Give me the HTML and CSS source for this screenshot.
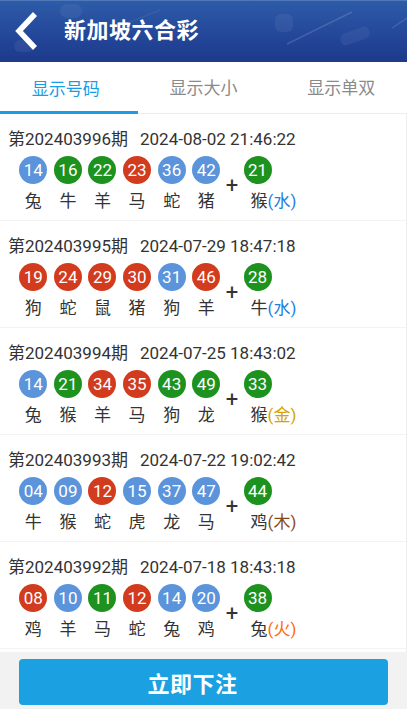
FILE: index.html
```html
<!DOCTYPE html>
<html lang="zh-CN">
<head>
<meta charset="utf-8">
<title>新加坡六合彩</title>
<link rel="stylesheet" href="styles.css">
</head>
<body>
<div class="page">
  <header class="topbar">
    <svg class="back" width="40" height="62" viewBox="0 0 40 62" aria-hidden="true">
      <polyline points="35,14 19,31 35,48" fill="none" stroke="#fff" stroke-width="5.5" stroke-linejoin="miter" stroke-linecap="butt"/>
    </svg>
    <h1 class="title">新加坡六合彩</h1>
    <svg class="deco" width="407" height="62" viewBox="0 0 407 62" aria-hidden="true">
      <line x1="287" y1="44" x2="352" y2="12" stroke="rgba(255,255,255,0.14)" stroke-width="1.5"/>
      <line x1="392" y1="28" x2="407" y2="18" stroke="rgba(255,255,255,0.12)" stroke-width="1.5"/>
      <line x1="115" y1="28" x2="160" y2="10" stroke="rgba(255,255,255,0.06)" stroke-width="1.5"/>
      <g fill="rgba(255,255,255,0.06)">
        <rect x="275" y="14" width="18" height="18" rx="6"/>
        <rect x="340" y="30" width="30" height="12" rx="5" transform="rotate(-20 355 36)"/>
        <rect x="60" y="4" width="22" height="14" rx="7"/>
        <rect x="14" y="40" width="20" height="12" rx="6"/>
      </g>
    </svg>
  </header>

  <nav class="tabs">
    <div class="tab active">显示号码</div>
    <div class="tab">显示大小</div>
    <div class="tab">显示单双</div>
  </nav>

  <main class="list">
    <section class="draw">
      <div class="draw-title">第202403996期<span class="time">2024-08-02 21:46:22</span></div>
      <div class="balls">
        <div class="cell"><span class="ball blue">14</span><span class="zod">兔</span></div>
        <div class="cell"><span class="ball green">16</span><span class="zod">牛</span></div>
        <div class="cell"><span class="ball green">22</span><span class="zod">羊</span></div>
        <div class="cell"><span class="ball red">23</span><span class="zod">马</span></div>
        <div class="cell"><span class="ball blue">36</span><span class="zod">蛇</span></div>
        <div class="cell"><span class="ball blue">42</span><span class="zod">猪</span></div>
        <div class="plus">+</div>
        <div class="cell special"><span class="ball green">21</span><span class="zod">猴<em class="el water">(水)</em></span></div>
      </div>
    </section>

    <section class="draw">
      <div class="draw-title">第202403995期<span class="time">2024-07-29 18:47:18</span></div>
      <div class="balls">
        <div class="cell"><span class="ball red">19</span><span class="zod">狗</span></div>
        <div class="cell"><span class="ball red">24</span><span class="zod">蛇</span></div>
        <div class="cell"><span class="ball red">29</span><span class="zod">鼠</span></div>
        <div class="cell"><span class="ball red">30</span><span class="zod">猪</span></div>
        <div class="cell"><span class="ball blue">31</span><span class="zod">狗</span></div>
        <div class="cell"><span class="ball red">46</span><span class="zod">羊</span></div>
        <div class="plus">+</div>
        <div class="cell special"><span class="ball green">28</span><span class="zod">牛<em class="el water">(水)</em></span></div>
      </div>
    </section>

    <section class="draw">
      <div class="draw-title">第202403994期<span class="time">2024-07-25 18:43:02</span></div>
      <div class="balls">
        <div class="cell"><span class="ball blue">14</span><span class="zod">兔</span></div>
        <div class="cell"><span class="ball green">21</span><span class="zod">猴</span></div>
        <div class="cell"><span class="ball red">34</span><span class="zod">羊</span></div>
        <div class="cell"><span class="ball red">35</span><span class="zod">马</span></div>
        <div class="cell"><span class="ball green">43</span><span class="zod">狗</span></div>
        <div class="cell"><span class="ball green">49</span><span class="zod">龙</span></div>
        <div class="plus">+</div>
        <div class="cell special"><span class="ball green">33</span><span class="zod">猴<em class="el metal">(金)</em></span></div>
      </div>
    </section>

    <section class="draw">
      <div class="draw-title">第202403993期<span class="time">2024-07-22 19:02:42</span></div>
      <div class="balls">
        <div class="cell"><span class="ball blue">04</span><span class="zod">牛</span></div>
        <div class="cell"><span class="ball blue">09</span><span class="zod">猴</span></div>
        <div class="cell"><span class="ball red">12</span><span class="zod">蛇</span></div>
        <div class="cell"><span class="ball blue">15</span><span class="zod">虎</span></div>
        <div class="cell"><span class="ball blue">37</span><span class="zod">龙</span></div>
        <div class="cell"><span class="ball blue">47</span><span class="zod">马</span></div>
        <div class="plus">+</div>
        <div class="cell special"><span class="ball green">44</span><span class="zod">鸡<em class="el wood">(木)</em></span></div>
      </div>
    </section>

    <section class="draw">
      <div class="draw-title">第202403992期<span class="time">2024-07-18 18:43:18</span></div>
      <div class="balls">
        <div class="cell"><span class="ball red">08</span><span class="zod">鸡</span></div>
        <div class="cell"><span class="ball blue">10</span><span class="zod">羊</span></div>
        <div class="cell"><span class="ball green">11</span><span class="zod">马</span></div>
        <div class="cell"><span class="ball red">12</span><span class="zod">蛇</span></div>
        <div class="cell"><span class="ball blue">14</span><span class="zod">兔</span></div>
        <div class="cell"><span class="ball blue">20</span><span class="zod">鸡</span></div>
        <div class="plus">+</div>
        <div class="cell special"><span class="ball green">38</span><span class="zod">兔<em class="el fire">(火)</em></span></div>
      </div>
    </section>
  </main>

  <footer class="bottombar">
    <button class="bet" type="button">立即下注</button>
  </footer>
</div>
</body>
</html>
```

FILE: styles.css
```css
* {
  box-sizing: border-box;
}

html, body {
  margin: 0;
  padding: 0;
  background: #fff;
}

body {
  font-family: Roboto, "Noto Sans CJK SC", sans-serif;
  color: #333;
}

.page {
  width: 407px;
  height: 709px;
  display: flex;
  flex-direction: column;
  overflow: hidden;
}

/* header */
.topbar {
  position: relative;
  height: 62px;
  flex: none;
  display: flex;
  align-items: center;
  background: linear-gradient(180deg, #2d5ca8 0%, #25499b 50%, #1d3a8b 100%);
  border-top: 1px solid #4f78bb;
  overflow: hidden;
}

.back {
  flex: none;
  position: relative;
  z-index: 1;
  margin-top: -1px;
}

.title {
  margin: -1px 0 0 24px;
  font-size: 22px;
  font-weight: bold;
  color: #fff;
  letter-spacing: 0.5px;
  line-height: 1;
  position: relative;
  z-index: 1;
}

.deco {
  position: absolute;
  left: 0;
  top: -1px;
}

/* tabs */
.tabs {
  flex: none;
  height: 52px;
  display: flex;
  border-bottom: 1px solid #ececec;
}

.tab {
  flex: 1;
  display: flex;
  align-items: center;
  justify-content: center;
  font-size: 17px;
  color: #8a8a8a;
  padding-top: 1px;
  border-bottom: 3px solid transparent;
}

.tab:first-child {
  padding-right: 6px;
}

.tab:last-child {
  padding-left: 6px;
}

.tab.active {
  color: #1a9de4;
  border-bottom-color: #1a9de4;
  margin-bottom: -1px;
}

/* list */
.list {
  flex: 1;
  overflow: hidden;
  border-right: 1px solid #eeeeee;
}

.draw {
  padding: 14px 0 9px 8px;
  border-bottom: 1px solid #f3f3f3;
}

.draw-title {
  font-size: 17px;
  line-height: 22px;
  color: #333;
  white-space: nowrap;
}

.time {
  margin-left: 12px;
}

.balls {
  display: flex;
  margin-top: 6px;
  padding-left: 8px;
}

.cell {
  width: 34.6px;
  display: flex;
  flex-direction: column;
  align-items: center;
}

.ball {
  width: 28px;
  height: 28px;
  border-radius: 50%;
  display: flex;
  align-items: center;
  justify-content: center;
  color: #fff;
  font-size: 17px;
  line-height: 1;
}

.ball.blue { background: #5b94db; }
.ball.green { background: #1e921f; }
.ball.red { background: #d23b1d; }

.zod {
  margin-top: 7px;
  font-size: 17px;
  line-height: 20px;
  color: #333;
  white-space: nowrap;
}

.plus {
  width: 17px;
  text-align: center;
  font-size: 22px;
  line-height: 20px;
  margin-top: 20px;
  color: #333;
  font-weight: normal;
}

.cell.special {
  width: 34px;
  align-items: flex-start;
}

.cell.special .ball {
  margin-left: 3px;
}

.cell.special .zod {
  margin-left: 10px;
}

.el {
  font-style: normal;
}

.el.water { color: #1c7fe3; }
.el.metal { color: #d6a400; }
.el.wood { color: #8a4a17; }
.el.fire { color: #ff6c0a; }

/* bottom */
.bottombar {
  flex: none;
  height: 57px;
  background: #f2f2f2;
  padding: 7px 19px 4px 19px;
}

.bet {
  display: block;
  width: 100%;
  height: 46px;
  border: none;
  border-radius: 4px;
  background: #1ba1e2;
  color: #fff;
  font-family: Roboto, "Noto Sans CJK SC", sans-serif;
  font-size: 22px;
  font-weight: bold;
  letter-spacing: 0.5px;
  padding: 0 22px 0 0;
}
```
